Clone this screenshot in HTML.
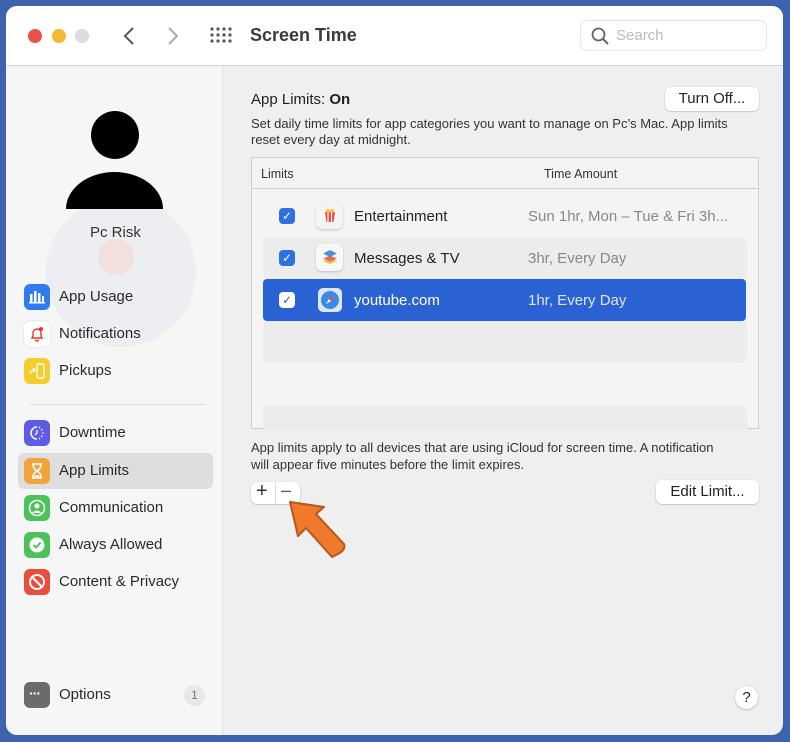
<!DOCTYPE html>
<html><head><meta charset="utf-8"><style>
*{margin:0;padding:0;box-sizing:border-box}
body{width:790px;height:742px;background:#3e63ae;font-family:"Liberation Sans",sans-serif;position:relative;overflow:hidden;color:#222}
.win{position:absolute;left:6px;top:6px;width:777px;height:729px;background:#efefef;border-radius:11px;overflow:hidden}
.tb{position:absolute;left:0;top:0;width:100%;height:60px;background:#fff;border-bottom:1px solid #d6d6d6}
.dot{position:absolute;top:23px;width:14px;height:14px;border-radius:50%}
.side{position:absolute;left:0;top:61px;width:217px;height:668px;background:#f6f6f6;border-right:1px solid #e2e2e2}
.abs{position:absolute}
.item{position:absolute;left:18px;height:26px;font-size:15px;color:#2a2a2a;line-height:26px;padding-left:35px}
.ic{position:absolute;left:0;top:0;width:26px;height:26px;border-radius:6px}
.t{position:absolute;white-space:nowrap}
.btn{position:absolute;background:#fff;border-radius:6px;box-shadow:0 0.5px 1.5px rgba(0,0,0,.3);font-size:14px;text-align:center;color:#222}
.cb{position:absolute;width:16px;height:16px;border-radius:4px;background:#2f6fe0;color:#fff;font-size:12px;line-height:16px;text-align:center}
.row{position:absolute;left:263px;width:483px;height:42px}
</style></head><body>
<div class="win">
 <div class="tb">
  <div class="dot" style="left:22px;background:#e9534d"></div>
  <div class="dot" style="left:46px;background:#f3b836"></div>
  <div class="dot" style="left:69px;background:#dcdcdc"></div>
  <svg class="abs" style="left:116px;top:20px" width="14" height="20"><path d="M11 2 L3 10 L11 18" stroke="#555" stroke-width="2" fill="none"/></svg>
  <svg class="abs" style="left:160px;top:20px" width="14" height="20"><path d="M3 2 L11 10 L3 18" stroke="#aaa" stroke-width="2" fill="none"/></svg>
  <svg class="abs" style="left:204px;top:21px" width="22" height="18" fill="#555"><g><circle cx="2" cy="2" r="1.6"/><circle cx="8" cy="2" r="1.6"/><circle cx="14" cy="2" r="1.6"/><circle cx="20" cy="2" r="1.6"/><circle cx="2" cy="8" r="1.6"/><circle cx="8" cy="8" r="1.6"/><circle cx="14" cy="8" r="1.6"/><circle cx="20" cy="8" r="1.6"/><circle cx="2" cy="14" r="1.6"/><circle cx="8" cy="14" r="1.6"/><circle cx="14" cy="14" r="1.6"/><circle cx="20" cy="14" r="1.6"/></g></svg>
  <div class="t" style="left:244px;top:19px;font-size:18px;font-weight:bold;color:#3a3a3a">Screen Time</div>
  <div class="abs" style="left:574px;top:14px;width:187px;height:31px;border:1px solid #e6e6e6;border-radius:7px;background:#fff"></div>
  <svg class="abs" style="left:585px;top:21px" width="18" height="18"><circle cx="7.5" cy="7.5" r="6" stroke="#666" stroke-width="1.8" fill="none"/><path d="M12 12 L17 17" stroke="#666" stroke-width="2"/></svg>
  <div class="t" style="left:610px;top:21px;font-size:15px;color:#bbb">Search</div>
 </div>
 <div class="side">
  <svg class="abs" style="left:30px;top:130px" width="200" height="200"><circle cx="85" cy="75" r="75" fill="#e3e6ee" opacity=".5"/><circle cx="80" cy="60" r="18" fill="#f5d2c8" opacity=".5"/></svg>
  <svg class="abs" style="left:58px;top:33px" width="100" height="112"><circle cx="51" cy="35" r="24" fill="#000"/><path d="M2 109 A48.5 37 0 0 1 99 109 Z" fill="#000"/></svg>
  <div class="t" style="left:84px;top:157px;font-size:15px;color:#333">Pc Risk</div>
  <div class="item" style="top:217px"><div class="ic" style="background:#2f7cf0"></div><svg class="abs" style="left:5px;top:6px" width="16" height="14" fill="#fff"><rect x="1" y="4" width="2.5" height="8"/><rect x="5" y="1" width="2.5" height="11"/><rect x="9" y="3" width="2.5" height="9"/><rect x="13" y="6" width="2" height="6"/><rect x="0" y="12" width="16" height="1.5"/></svg>App Usage</div>
  <div class="item" style="top:254px"><div class="ic" style="background:#fff;box-shadow:0 0 1px #aaa"></div><svg class="abs" style="left:5px;top:5px" width="16" height="16"><path d="M3 12 L4 10 V7 A4 4 0 0 1 12 7 V10 L13 12 Z M6.5 13.5 A1.5 1.5 0 0 0 9.5 13.5" stroke="#e33" stroke-width="1.4" fill="none"/><circle cx="12" cy="3" r="2" fill="#e33"/></svg>Notifications</div>
  <div class="item" style="top:291px"><div class="ic" style="background:#f5cd2d"></div><svg class="abs" style="left:5px;top:5px" width="16" height="16"><rect x="8" y="1" width="7" height="14" rx="1.5" stroke="#fff" stroke-width="1.4" fill="none"/><path d="M1 11 Q2 7 6 7 M4 5 L6 7 L4 9" stroke="#fff" stroke-width="1.3" fill="none"/></svg>Pickups</div>
  <div class="abs" style="left:24px;top:337px;width:176px;height:1px;background:#ddd"></div>
  <div class="item" style="top:353px"><div class="ic" style="background:#5e5ce6"></div><svg class="abs" style="left:5px;top:5px" width="16" height="16"><path d="M8 2 A6 6 0 1 0 8 14" stroke="#fff" stroke-width="1.5" fill="none"/><path d="M10 3 L11 2 M12 5 L13.5 4.5 M13 8 H14.5 M12 11 L13.5 11.5 M10 13 L11 14" stroke="#fff" stroke-width="1.3"/><path d="M8 5 V8 L6 10" stroke="#fff" stroke-width="1.3" fill="none"/></svg>Downtime</div>
  <div class="abs" style="left:12px;top:386px;width:195px;height:36px;background:#dedede;border-radius:6px"></div>
  <div class="item" style="top:391px"><div class="ic" style="background:#f2a33a"></div><svg class="abs" style="left:7px;top:5px" width="12" height="16"><path d="M1 1 H11 M1 15 H11 M2 1 Q2 6 6 8 Q10 10 10 15 M10 1 Q10 6 6 8 Q2 10 2 15" stroke="#fff" stroke-width="1.6" fill="none"/><path d="M3 14 Q6 10 9 14Z" fill="#fff"/></svg>App Limits</div>
  <div class="item" style="top:428px"><div class="ic" style="background:#4cc35a"></div><svg class="abs" style="left:4px;top:4px" width="18" height="18"><circle cx="9" cy="9" r="7.5" stroke="#fff" stroke-width="1.5" fill="none"/><circle cx="9" cy="7" r="2.5" fill="#fff"/><path d="M4 14 Q9 9 14 14" fill="#fff"/></svg>Communication</div>
  <div class="item" style="top:465px"><div class="ic" style="background:#4cc35a"></div><svg class="abs" style="left:4px;top:4px" width="18" height="18"><circle cx="9" cy="9" r="7.5" fill="#fff"/><path d="M5.5 9 L8 11.5 L12.5 6.5" stroke="#4cc35a" stroke-width="2" fill="none"/></svg>Always Allowed</div>
  <div class="item" style="top:502px"><div class="ic" style="background:#ea4d3d"></div><svg class="abs" style="left:4px;top:4px" width="18" height="18"><circle cx="9" cy="9" r="7" stroke="#fff" stroke-width="2" fill="none"/><path d="M4 4 L14 14" stroke="#fff" stroke-width="2"/></svg>Content &amp; Privacy</div>
  <div class="item" style="top:615px"><div class="ic" style="background:#6b6b6b"></div><div class="t" style="left:5px;top:-2px;color:#fff;font-size:14px;font-weight:bold;letter-spacing:-1px">···</div>Options</div>
  <div class="abs" style="left:178px;top:618px;width:21px;height:21px;border-radius:50%;background:#e8e8e8;font-size:12px;color:#777;text-align:center;line-height:21px">1</div>
 </div>
 <div class="t" style="left:245px;top:85px;font-size:15px;color:#222">App Limits: <b>On</b></div>
 <div class="btn" style="left:659px;top:81px;width:94px;height:24px;line-height:24px;font-size:15px">Turn Off...</div>
 <div class="t" style="left:245px;top:110px;font-size:13px;line-height:16px;color:#333">Set daily time limits for app categories you want to manage on Pc’s Mac. App limits<br>reset every day at midnight.</div>
 <div class="abs" style="left:245px;top:151px;width:508px;height:272px;background:#f4f4f4;border:1px solid #cfcfcf">
  <div class="abs" style="left:0;top:0;width:100%;height:31px;border-bottom:1px solid #cfcfcf;background:#f3f3f3"></div>
  <div class="t" style="left:9px;top:9px;font-size:12.5px;color:#333">Limits</div>
  <div class="t" style="left:292px;top:9px;font-size:12.5px;color:#333">Time Amount</div>
  <div class="abs" style="left:11px;top:79px;width:484px;height:42px;background:#ececec;border-radius:5px"></div>
  <div class="abs" style="left:11px;top:163px;width:484px;height:42px;background:#ececec;border-radius:5px"></div>
  <div class="abs" style="left:11px;top:247px;width:484px;height:24px;background:#ececec;border-radius:5px 5px 0 0"></div>
 </div>
 <div class="row" style="top:189px;left:257px">
  <div class="cb" style="left:16px;top:13px">✓</div>
  <div class="abs" style="left:53px;top:7px;width:27px;height:27px;background:#f4f4f4;border-radius:6px;box-shadow:0 1px 2px rgba(0,0,0,.2)"></div>
  <svg class="abs" style="left:60px;top:13px" width="14" height="15"><path d="M2 4 H12 L10.5 14 H3.5 Z" fill="#e64a3b"/><path d="M5 4 V14 M8.5 4 V14" stroke="#fff" stroke-width="1.2"/><circle cx="5" cy="3" r="2" fill="#f6c34b"/><circle cx="9" cy="3" r="2" fill="#f6c34b"/></svg>
  <div class="t" style="left:91px;top:13px;font-size:15px;color:#222">Entertainment</div>
  <div class="t" style="left:265px;top:13px;font-size:15px;color:#888">Sun 1hr, Mon – Tue &amp; Fri 3h...</div>
 </div>
 <div class="row" style="top:231px;left:257px">
  <div class="cb" style="left:16px;top:13px">✓</div>
  <div class="abs" style="left:53px;top:7px;width:27px;height:27px;background:#f8f8f8;border-radius:6px;box-shadow:0 1px 2px rgba(0,0,0,.2)"></div>
  <svg class="abs" style="left:59px;top:12px" width="16" height="16"><path d="M8 9 L1 12 L8 15 L15 12Z" fill="#f3c43a"/><path d="M8 6.5 L1 9.5 L8 12.5 L15 9.5Z" fill="#e96a5a"/><path d="M8 1 L1 4.5 L8 8 L15 4.5Z" fill="#4c8fe0"/></svg>
  <div class="t" style="left:91px;top:13px;font-size:15px;color:#222">Messages &amp; TV</div>
  <div class="t" style="left:265px;top:13px;font-size:15px;color:#888">3hr, Every Day</div>
 </div>
 <div class="row" style="top:273px;left:257px;background:#2a62d4;border-radius:4px">
  <div class="cb" style="left:16px;top:13px;background:#fff;color:#2a62d4">✓</div>
  <div class="abs" style="left:55px;top:9px;width:24px;height:24px;background:#dfe6f2;border-radius:5px"></div>
  <svg class="abs" style="left:56px;top:10px" width="22" height="22"><circle cx="11" cy="11" r="9" fill="#3b8ae6"/><path d="M15 7 L10 10 L7 15 L12 12Z" fill="#fff"/><path d="M15 7 L10 10 L12 12Z" fill="#e33"/></svg>
  <div class="t" style="left:91px;top:13px;font-size:15px;color:#fff">youtube.com</div>
  <div class="t" style="left:265px;top:13px;font-size:15px;color:#dfe6f7">1hr, Every Day</div>
 </div>
 <div class="t" style="left:245px;top:433px;font-size:13px;line-height:17px;color:#333">App limits apply to all devices that are using iCloud for screen time. A notification<br>will appear five minutes before the limit expires.</div>
 <div class="btn" style="left:245px;top:476px;width:49px;height:22px"></div>
 <div class="abs" style="left:269px;top:476px;width:1px;height:22px;background:#ddd"></div>
 <div class="t" style="left:250px;top:474px;font-size:20px;color:#333">+</div>
 <div class="t" style="left:275px;top:474px;font-size:18px;color:#555">–</div>
 <div class="btn" style="left:650px;top:474px;width:103px;height:24px;line-height:24px;font-size:15px">Edit Limit...</div>
 <svg class="abs" style="left:280px;top:492px" width="70" height="70"><path d="M4 4 L38 9 L30 16 L58 46 Q60 52 52 56 L46 59 L20 30 L12 38 Z" fill="#ef7a2c" stroke="#b9561b" stroke-width="2" stroke-linejoin="round"/></svg>
 <div class="abs" style="left:729px;top:680px;width:23px;height:23px;border-radius:50%;background:#fff;box-shadow:0 0.5px 2px rgba(0,0,0,.3);font-size:15px;text-align:center;line-height:23px;color:#222">?</div>
</div>
</body></html>
